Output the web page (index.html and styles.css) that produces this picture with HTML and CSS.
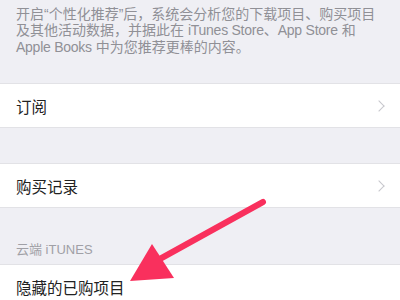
FILE: index.html
```html
<!DOCTYPE html>
<html lang="zh-CN">
<head>
<meta charset="utf-8">
<link rel="stylesheet" href="styles.css">
</head>
<body>
<div class="page">
  <div class="intro">
    <div class="line">开启“个性化推荐”后，系统会分析您的下载项目、购买项目</div>
    <div class="line">及其他活动数据，并据此在 <span class="lat">iTunes Store</span>、<span class="lat">App Store</span> 和</div>
    <div class="line"><span class="lat">Apple Books</span> 中为您推荐更棒的内容。</div>
  </div>
  <div class="row"><span class="label">订阅</span><span class="chev"></span></div>
  <div class="gap"></div>
  <div class="row"><span class="label">购买记录</span><span class="chev"></span></div>
  <div class="header">云端 iTUNES</div>
  <div class="row"><span class="label">隐藏的已购项目</span></div>
  <svg class="arrow" width="400" height="300" viewBox="0 0 400 300">
    <line x1="263" y1="202" x2="158" y2="260" stroke="#f9305d" stroke-width="6" stroke-linecap="round"/>
    <polygon points="130,281 152,244 174,278" fill="#f9305d"/>
  </svg>
</div>
</body>
</html>
```
FILE: styles.css
```css
html, body {
  margin: 0;
  padding: 0;
}
body {
  background: #efeff4;
  font-family: "Liberation Sans", "Noto Sans CJK SC", sans-serif;
  width: 400px;
  height: 300px;
  overflow: hidden;
}
.page {
  position: relative;
  width: 400px;
  height: 300px;
}
.intro {
  box-sizing: border-box;
  height: 84px;
  padding: 6px 16px 0 16px;
  font-size: 14px;
  line-height: 16.3px;
  color: #909096;
  border-bottom: 1px solid #e2e2e6;
}
.line {
  white-space: nowrap;
}
.lat {
  letter-spacing: -0.25px;
}
.row {
  box-sizing: border-box;
  height: 44px;
  background: #fff;
  border-bottom: 1px solid #e2e2e6;
  display: flex;
  align-items: center;
  justify-content: space-between;
  padding: 0 17px 0 16px;
}
.label {
  font-size: 15.5px;
  color: #222;
}
.chev {
  width: 7px;
  height: 7px;
  border-right: 1.5px solid #c7c7cc;
  border-top: 1.5px solid #c7c7cc;
  transform: rotate(45deg);
}
.gap {
  height: 35px;
  border-bottom: 1px solid #e2e2e6;
}
.header {
  box-sizing: border-box;
  height: 57px;
  border-bottom: 1px solid #e2e2e6;
  display: flex;
  align-items: flex-end;
  padding: 0 16px 6px;
  font-size: 13px;
  color: #a0a0a6;
}
.arrow {
  position: absolute;
  left: 0;
  top: 0;
}
```
